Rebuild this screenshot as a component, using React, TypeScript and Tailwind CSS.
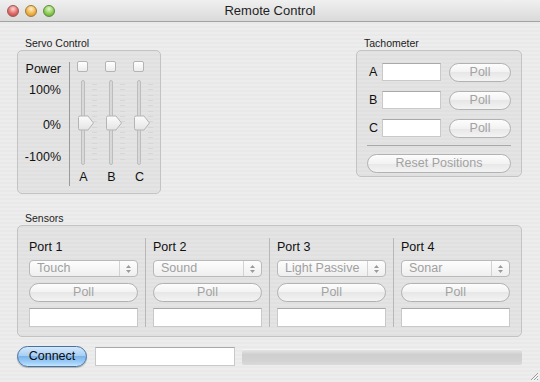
import React from "react";

const ticks = Array.from({ length: 15 }, (_, i) => i);

function Group({ title, className, boxClass, children }: { title: string; className?: string; boxClass?: string; children: React.ReactNode }) {
  return (
    <div className={className}>
      <div className="pl-[8px] text-[10.5px] leading-[13px] text-[#222]">{title}</div>
      <div className={`rounded-[5px] border border-[#c3c3c3] bg-black/[0.035] ${boxClass ?? ""}`}>{children}</div>
    </div>
  );
}

function PillButton({ label, className }: { label: string; className?: string }) {
  return (
    <div
      className={`flex items-center justify-center rounded-full border border-[#b2b2b2] bg-[linear-gradient(#fdfdfd,#f2f2f2_50%,#e7e7e7_50%,#f3f3f3)] text-[12.5px] text-[#a2a2a2] ${className ?? ""}`}
    >
      {label}
    </div>
  );
}

function Field({ className }: { className?: string }) {
  return <div className={`border border-[#c9c9c9] border-t-[#a9a9a9] bg-white ${className ?? ""}`} />;
}

function Popup({ value }: { value: string }) {
  return (
    <div className="flex h-[17px] w-[109px] items-center rounded-[4px] border border-[#b9b9b9] bg-[linear-gradient(#fdfdfd,#efefef)] text-[12.5px] text-[#a0a0a0]">
      <div className="flex-1 pl-[7px] leading-[15px]">{value}</div>
      <div className="flex h-full w-[18px] flex-col items-center justify-center gap-[2px] border-l border-[#d2d2d2]">
        <svg width="5" height="3" viewBox="0 0 5 3">
          <path d="M0 3 L2.5 0 L5 3 Z" fill="#9a9a9a" />
        </svg>
        <svg width="5" height="3" viewBox="0 0 5 3">
          <path d="M0 0 L2.5 3 L5 0 Z" fill="#9a9a9a" />
        </svg>
      </div>
    </div>
  );
}

function SliderColumn({ letter }: { letter: string }) {
  return (
    <div className="flex w-[28px] flex-col">
      <div className="ml-[1px] mt-[10px] h-[11px] w-[11px] rounded-[2px] border border-[#b4b4b4] bg-[linear-gradient(#ffffff,#ececec)]" />
      <div className="relative mt-[8px] h-[85px]">
        <div className="absolute left-[5px] top-0 h-[85px] w-[4px] rounded-full border border-[#bdbdbd] bg-[linear-gradient(90deg,#cccccc,#e4e4e4,#cccccc)]" />
        <div className="absolute left-[16px] top-[4px] flex h-[76px] flex-col justify-between">
          {ticks.map((t) => (
            <div key={t} className="h-px w-[5px] bg-[#d6d6d6]" />
          ))}
        </div>
        <svg className="absolute left-[1px] top-[35px]" width="18" height="16" viewBox="0 0 18 16">
          <defs>
            <linearGradient id={`th${letter}`} x1="0" y1="0" x2="0" y2="1">
              <stop offset="0" stopColor="#fcfcfc" />
              <stop offset="1" stopColor="#e4e4e4" />
            </linearGradient>
          </defs>
          <path d="M1.5 2.5 Q1.5 1 3 1 H11 L16.5 8 L11 15 H3 Q1.5 15 1.5 13.5 Z" fill={`url(#th${letter})`} stroke="#b4b4b4" strokeWidth="1" />
        </svg>
      </div>
      <div className="mt-[5px] w-[15px] text-center text-[12.5px] leading-[14px] text-[#111]">{letter}</div>
    </div>
  );
}

function TachRow({ letter }: { letter: string }) {
  return (
    <div className="flex h-[18px] items-center">
      <div className="w-[25px] pl-[12px] text-[12.5px] text-[#111]">{letter}</div>
      <Field className="h-[18px] w-[59px]" />
      <PillButton label="Poll" className="ml-[8px] h-[19px] w-[62px]" />
    </div>
  );
}

function PortCell({ name, value }: { name: string; value: string }) {
  return (
    <div className="flex w-[109px] flex-col">
      <div className="text-[12.5px] leading-[14px] text-[#111]">{name}</div>
      <div className="mt-[6px]">
        <Popup value={value} />
      </div>
      <PillButton label="Poll" className="mt-[6px] h-[19px] w-[109px]" />
      <Field className="mt-[6px] h-[19px] w-[109px]" />
    </div>
  );
}

function Sep() {
  return <div className="-mt-[2px] ml-[7px] mr-[7px] w-px self-stretch bg-[#b8b8b8]" />;
}

export default function App() {
  return (
    <div className="relative flex h-[382px] w-[540px] flex-col overflow-hidden bg-[repeating-linear-gradient(0deg,#ededed_0px,#ededed_2px,#e9e9e9_2px,#e9e9e9_4px)] font-['Liberation_Sans',Arial,sans-serif]">
      {/* title bar */}
      <div className="relative flex h-[22px] items-center border-b border-[#a3a3a3] bg-[linear-gradient(#f0f0f0,#dadada)]">
        <div className="flex gap-[6px] pl-[7px]">
          <div className="h-[12px] w-[12px] rounded-full border border-[#9a5a5a] bg-[radial-gradient(circle_at_50%_30%,#ffd6d6,#e06a66_55%,#b9403c)]" />
          <div className="h-[12px] w-[12px] rounded-full border border-[#a07a3a] bg-[radial-gradient(circle_at_50%_30%,#fff0c8,#f0b24a_55%,#c98a1e)]" />
          <div className="h-[12px] w-[12px] rounded-full border border-[#5e8a3a] bg-[radial-gradient(circle_at_50%_30%,#e2f7c8,#8ccc56_55%,#5a9a2e)]" />
        </div>
        <div className="flex-1 pr-[55px] text-center text-[13px] text-[#1e1e1e]">Remote Control</div>
      </div>

      <div className="flex flex-col pl-[17px] pr-[18px] pt-[15px]">
        <div className="flex items-start justify-between">
          <Group title="Servo Control" boxClass="flex h-[144px] w-[144px]">
            <div className="flex w-[51px] flex-col items-end pr-[8px] text-[12.5px] leading-[14px] text-[#111]">
              <div className="mt-[11px]">Power</div>
              <div className="mt-[7px]">100%</div>
              <div className="mt-[21px]">0%</div>
              <div className="mt-[18px]">-100%</div>
            </div>
            <div className="mb-[7px] mt-[11px] w-px self-stretch bg-[#9a9a9a]" />
            <div className="ml-[6px] flex">
              <SliderColumn letter="A" />
              <SliderColumn letter="B" />
              <SliderColumn letter="C" />
            </div>
          </Group>

          <Group title="Tachometer" boxClass="flex h-[127px] w-[166px] flex-col pt-[12px]">
            <div className="flex flex-col gap-[10px]">
              <TachRow letter="A" />
              <TachRow letter="B" />
              <TachRow letter="C" />
            </div>
            <div className="ml-[10px] mr-[10px] mt-[8px] h-px bg-[#a8a8a8]" />
            <PillButton label="Reset Positions" className="ml-[10px] mt-[8px] h-[19px] w-[144px]" />
          </Group>
        </div>

        <Group title="Sensors" className="mt-[18px]" boxClass="flex h-[112px] w-[505px] px-[11px] pt-[14px]">
          <div className="flex h-[87px]">
            <PortCell name="Port 1" value="Touch" />
            <Sep />
            <PortCell name="Port 2" value="Sound" />
            <Sep />
            <PortCell name="Port 3" value="Light Passive" />
            <Sep />
            <PortCell name="Port 4" value="Sonar" />
          </div>
        </Group>

        <div className="mt-[9px] flex items-center">
          <div className="flex h-[21px] w-[70px] items-center justify-center rounded-full border border-[#46729f] bg-[linear-gradient(#d4e8fb,#a9cff4_45%,#7cb4ea_50%,#a2d2fb_85%,#c8e6ff)] text-[12.5px] text-[#0d0d0d] shadow-[0_1px_1px_rgba(0,0,0,0.25)]">
            Connect
          </div>
          <Field className="ml-[8px] h-[19px] w-[140px]" />
          <div className="ml-[7px] h-[16px] flex-1 rounded-[2px] border-t border-[#f4f4f4] bg-[linear-gradient(#e4e4e4,#cfcfcf_30%,#d2d2d2_70%,#dadada)]" />
        </div>
      </div>

      {/* resize grip */}
      <svg className="absolute bottom-[1px] right-[1px]" width="11" height="11" viewBox="0 0 11 11">
        <path d="M10 3 L3 10 M10 6 L6 10 M10 9 L9 10" stroke="#9a9a9a" strokeWidth="1" />
        <path d="M10.8 3.8 L3.8 10.8 M10.8 6.8 L6.8 10.8" stroke="#ffffff" strokeWidth="0.8" />
      </svg>
    </div>
  );
}
